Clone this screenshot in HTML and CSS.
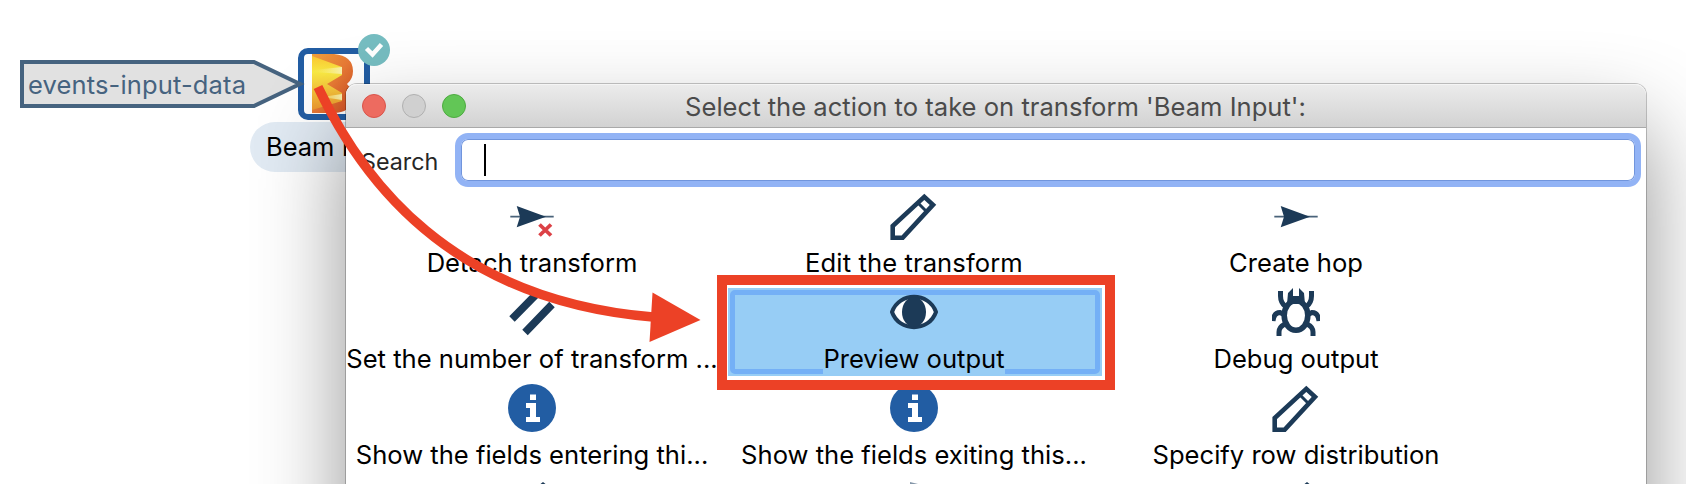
FILE: index.html
```html
<!DOCTYPE html>
<html lang="en">
<head>
<meta charset="utf-8">
<title>Transform actions</title>
<link rel="stylesheet" href="styles.css">
</head>
<body>
<svg class="defs" width="0" height="0">
  <defs>
    <symbol id="hop" viewBox="0 0 48 48"><path d="M2.300 24.700H45.700" stroke="#4a637a" stroke-width="1.800"/><path d="M8.700 14L38 24.700L8.700 35.200L12 24.700Z" fill="#1c3a57"/></symbol>
    <symbol id="pencil" viewBox="0 0 48 48"><path d="M2.700 45.800V34L34.300 4.800L43 12.900L12.600 45.800Z" fill="none" stroke="#1c3a57" stroke-width="4.600"/><path d="M28 11L37 20" stroke="#1c3a57" stroke-width="3"/></symbol>
    <symbol id="info" viewBox="0 0 48 48"><circle cx="24" cy="24" r="24" fill="#225da3"/><path d="M22 10.500H28V16H22ZM18 19H28V33H32V38H18V33H22V24H18Z" fill="#fff"/></symbol>
    <symbol id="eye" viewBox="0 0 48 48"><path d="M2 24C9 3.800 39 3.800 46 24C39 44.200 9 44.200 2 24Z" fill="#fff" stroke="#1c3a57" stroke-width="4"/><ellipse cx="24" cy="24" rx="12" ry="15" fill="#1c3a57"/></symbol>
    <symbol id="bug" viewBox="0 0 48 48"><g fill="none" stroke="#1c3a57" stroke-width="5"><ellipse cx="24" cy="27.500" rx="11.800" ry="14.800" stroke-width="5.600"/><path d="M8.500 3V8Q8.500 15 14 19M39.500 3V8Q39.500 15 34 19M1 33Q2 24.500 8 24.500L13 27M47 33Q46 24.500 40 24.500L35 27M7 48V44Q7 39 13 36M41 48V44Q41 39 35 36"/></g><path d="M15 16L16 5L21 0V8H27V0L32 5L33 16Z" fill="#1c3a57"/></symbol>
  </defs>
</svg>
<main class="canvas">
  <svg class="graph" width="420" height="180" viewBox="0 0 420 180">
    <defs>
      <linearGradient id="beamBody" x1="0" y1="0" x2="1" y2="1"><stop offset="0" stop-color="#f0a03c"/><stop offset=".5" stop-color="#e87a35"/><stop offset="1" stop-color="#cf4a22"/></linearGradient>
      <linearGradient id="beamRay" x1="0" y1="0" x2="0" y2="1"><stop offset="0" stop-color="#fbc733"/><stop offset=".3" stop-color="#f9ea43"/><stop offset=".6" stop-color="#f5c63c"/><stop offset="1" stop-color="#ee982e"/></linearGradient>
      <linearGradient id="beamGlow"><stop offset="0" stop-color="#fbf080" stop-opacity="0"/><stop offset="1" stop-color="#fbf3b0"/></linearGradient>
    </defs>
    <rect x="301" y="51" width="66" height="66" rx="7" fill="#fff" stroke="#225da3" stroke-width="6"/>
    <path d="M22 62H254L300 84L254 106H22Z" fill="#e1e1e1" stroke="#46637f" stroke-width="4"/>
    <path d="M312 54H334Q353 56 353 71Q353 79 347 84Q353 90 353 98Q351 113 333 113H312Z" fill="url(#beamBody)"/>
    <path d="M312 56L342 67V75L327 84L342 93V101L312 110Z" fill="url(#beamRay)"/>
    <path d="M314 70L342 67V74L314 72ZM322 97L342 94V100Z" fill="url(#beamGlow)"/>
    <circle cx="374" cy="50" r="16" fill="#76bdc1"/>
    <path d="M366.500 48.500L372.500 54.500L381.500 44.500" fill="none" stroke="#fff" stroke-width="4.500"/>
    <rect x="250" y="122" width="150" height="50" rx="25" fill="#e1eaf3"/>
    <text class="graph-text source" x="28" y="94" textLength="218">events-input-data</text>
    <text class="graph-text" x="266" y="156">Beam I</text>
  </svg>
  <section class="dialog">
    <header class="titlebar">
      <div class="lights"><i class="light close"></i><i class="light minimize"></i><i class="light zoom"></i></div>
      <h1 class="title">Select the action to take on transform 'Beam Input':</h1>
    </header>
    <div class="search"><label class="search-label">Search</label><div class="field"><i class="caret"></i></div></div>
    <div class="actions">
      <div class="action"><svg class="icon"><use href="#hop"/><path d="M31.500 32.500L43 43.500M43 32.500L31.500 43.500" stroke="#dc4146" stroke-width="3.800"/></svg><span class="label">Detach transform</span></div>
      <div class="action"><svg class="icon"><use href="#pencil"/></svg><span class="label wide">Edit the transform</span></div>
      <div class="action"><svg class="icon"><use href="#hop"/></svg><span class="label">Create hop</span></div>
      <div class="action"><svg class="icon"><path d="M4 31L31 3.500M17 44.500L44 16.500" stroke="#1c3a57" stroke-width="7.600"/></svg><span class="label">Set the number of transform ...</span></div>
      <div class="action selected"><svg class="icon"><use href="#eye"/></svg><span class="label">Preview output</span></div>
      <div class="action"><svg class="icon"><use href="#bug"/></svg><span class="label">Debug output</span></div>
      <div class="action"><svg class="icon"><use href="#info"/></svg><span class="label">Show the fields entering thi...</span></div>
      <div class="action"><svg class="icon"><use href="#info"/></svg><span class="label">Show the fields exiting this...</span></div>
      <div class="action"><svg class="icon"><use href="#pencil"/></svg><span class="label">Specify row distribution</span></div>
      <div class="action"><svg class="icon"><path d="M32.500 4L35 2L37.500 4" fill="#1c3a57"/></svg></div>
      <div class="action"><svg class="icon"><path d="M20 2L28 4H20Z" fill="#8496a8"/></svg></div>
      <div class="action"><svg class="icon"><path d="M32.500 4L35 2L37.500 4" fill="#1c3a57"/></svg></div>
    </div>
  </section>
  <svg class="markup" width="1686" height="484" viewBox="0 0 1686 484">
    <path d="M318 87C362 180 450 300 653 317" fill="none" stroke="#ec4126" stroke-width="9.500"/>
    <path d="M652.500 292.500L700.500 320L649.500 342Z" fill="#ec4126"/>
    <rect x="722" y="280" width="388" height="105" fill="none" stroke="#ec4126" stroke-width="10"/>
  </svg>
</main>
</body>
</html>
```
FILE: styles.css
```css
* { box-sizing: border-box; }
body { margin: 0; background: #fff; font-family: Inter, "Liberation Sans", sans-serif; }
.defs { position: absolute; }
.canvas { position: relative; width: 1686px; height: 484px; overflow: hidden; }
.graph, .markup { position: absolute; left: 0; top: 0; }
.graph-text { font-size: 25.500px; fill: #000; }
.source { fill: #46637f; }
.dialog {
  position: absolute; left: 346px; top: 84px; width: 1300px; height: 760px;
  background: #fff; border-radius: 11px 11px 0 0;
  box-shadow: 0 0 0 1px rgba(0, 0, 0, .22), 0 44px 88px rgba(0, 0, 0, .43);
}
.titlebar {
  display: flex; align-items: center; height: 44px; padding-left: 16px;
  border-bottom: 1px solid #a9a9a9; border-radius: 11px 11px 0 0;
  background: linear-gradient(#ececec, #d2d2d2);
  box-shadow: inset 0 1px #f5f5f5;
}
.lights { display: flex; gap: 16px; width: 104px; padding-top: 1px; }
.light { width: 24px; height: 24px; border-radius: 50%; border: 1px solid; }
.close { background: #ed6b60; border-color: #d9534a; }
.minimize { background: #d0d0d0; border-color: #b0b0b0; }
.zoom { background: #62c656; border-color: #4dab40; }
.title { flex: 1; margin: 0 121px 0 0; padding-top: 2px; text-align: center; font-size: 25.600px; font-weight: 400; color: #4b4b4b; white-space: nowrap; }
.search { display: flex; align-items: center; height: 64px; padding: 0 5px 0 15px; }
.search-label { width: 94px; padding-top: 3px; font-size: 23.300px; color: #262626; }
.field {
  display: flex; align-items: center; flex: 1; height: 54px; padding-left: 23px;
  border: 6px solid #92b3f5; border-radius: 13px; box-shadow: inset 0 0 0 1px #7195dc;
}
.caret { width: 2px; height: 32px; background: #000; }
.actions { display: grid; grid-template-columns: repeat(3, 382px); grid-auto-rows: 96px; margin-left: -5px; }
.action { display: flex; flex-direction: column; align-items: center; }
.icon { width: 48px; height: 48px; flex: none; }
.label { font-size: 25.600px; line-height: 32px; margin-top: 7px; white-space: nowrap; color: #000; }
.wide { letter-spacing: .1px; }
.selected { position: relative; isolation: isolate; margin: 0 3px 0 5px; padding-right: 2px; height: 88px; background: #97cdf5; }
.selected::before { content: ""; position: absolute; z-index: -1; inset: 2px; border: 5px solid #74b0f6; border-radius: 5px; }
.selected .label { background: #97cdf5; }
```
